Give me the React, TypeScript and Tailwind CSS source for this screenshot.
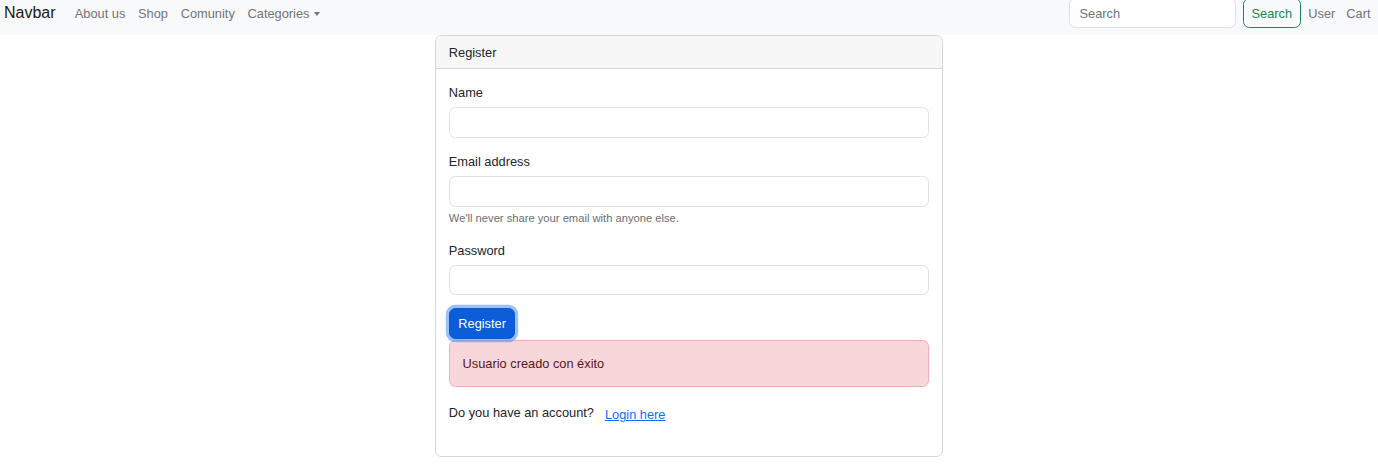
import React from "react";

const font = { fontFamily: '"Liberation Sans", Arial, sans-serif' };

export default function App() {
  return (
    <div className="min-h-[468px] bg-white text-[12.8px] leading-[19.2px] text-[#212529]" style={font}>
      <nav className="h-[35px] bg-[#f8f9fa] px-[4px] flex">
        <div className="-mt-[2px] h-[30.4px] flex items-center w-full">
          <span className="text-[16px] leading-[24px] text-[#191919] mr-[12.8px]">Navbar</span>
          <a className="px-[6.4px] text-[#737475]">About us</a>
          <a className="px-[6.4px] text-[#737475]">Shop</a>
          <a className="px-[6.4px] text-[#737475]">Comunity</a>
          <a className="px-[6.4px] text-[#737475] flex items-center">
            Categories
            <span className="ml-[5px] mt-[1px] w-0 h-0 border-l-[3.5px] border-r-[3.5px] border-t-[4px] border-l-transparent border-r-transparent border-t-[#737475]" />
          </a>
          <div className="ml-auto flex items-center">
            <input
              placeholder="Search"
              className="w-[167.5px] h-[30.4px] bg-white border border-[#dee2e6] rounded-[6.4px] px-[9.6px] text-[12.8px] placeholder:text-[#6c757d] outline-none mr-[6.4px]"
            />
            <button className="w-[58px] h-[30.4px] border border-[#198754] text-[#198754] rounded-[6.4px] text-[12.8px]">
              Search
            </button>
            <a className="pl-[7.5px] pr-[5px] text-[#737475]">User</a>
            <a className="pl-[6px] pr-[3.5px] text-[#737475]">Cart</a>
          </div>
        </div>
      </nav>

      <div className="w-[508px] mx-auto border border-[#d6d6d6] rounded-[6.4px] overflow-hidden">
        <div className="bg-[#f7f7f7] border-b border-[#d6d6d6] px-[12.8px] pt-[7.4px] pb-[5.4px]">Register</div>
        <div className="p-[12.8px]">
          <div className="mb-[12.8px]">
            <label className="block pt-[1px] mb-[5.4px]">Name</label>
            <input className="block w-full h-[30.4px] border border-[#dee2e6] rounded-[6.4px] outline-none" />
          </div>
          <div className="mb-[12.8px]">
            <label className="block pt-[1px] mb-[5.4px]">Email address</label>
            <input className="block w-full h-[30.4px] border border-[#dee2e6] rounded-[6.4px] outline-none" />
            <div className="mt-[3.2px] text-[11.2px] leading-[16.8px] text-[#6b6e71]">
              We'll never share your email with anyone else.
            </div>
          </div>
          <div className="mb-[12.8px]">
            <label className="block pt-[2px] mb-[4.4px]">Password</label>
            <input className="block w-full h-[30.4px] border border-[#dee2e6] rounded-[6.4px] outline-none" />
          </div>
          <button className="h-[30.4px] px-[8.5px] bg-[#0b5ed7] border border-[#0a58ca] text-white rounded-[6.4px] shadow-[0_0_0_3.2px_rgba(49,132,253,0.5)]">
            Register
          </button>
          <div className="mt-[1px] bg-[#f8d7da] border border-[#f1aeb5] text-[#58151c] rounded-[6.4px] px-[12.8px] py-[13.4px] mb-[15.8px]">
            Usuario creado con éxito
          </div>
          <div className="flex items-start mb-[19px]">
            <span>Do you have an account?</span>
            <a className="ml-[11px] mt-[2px] text-[#0d6efd] underline">Login here</a>
          </div>
        </div>
      </div>
    </div>
  );
}
